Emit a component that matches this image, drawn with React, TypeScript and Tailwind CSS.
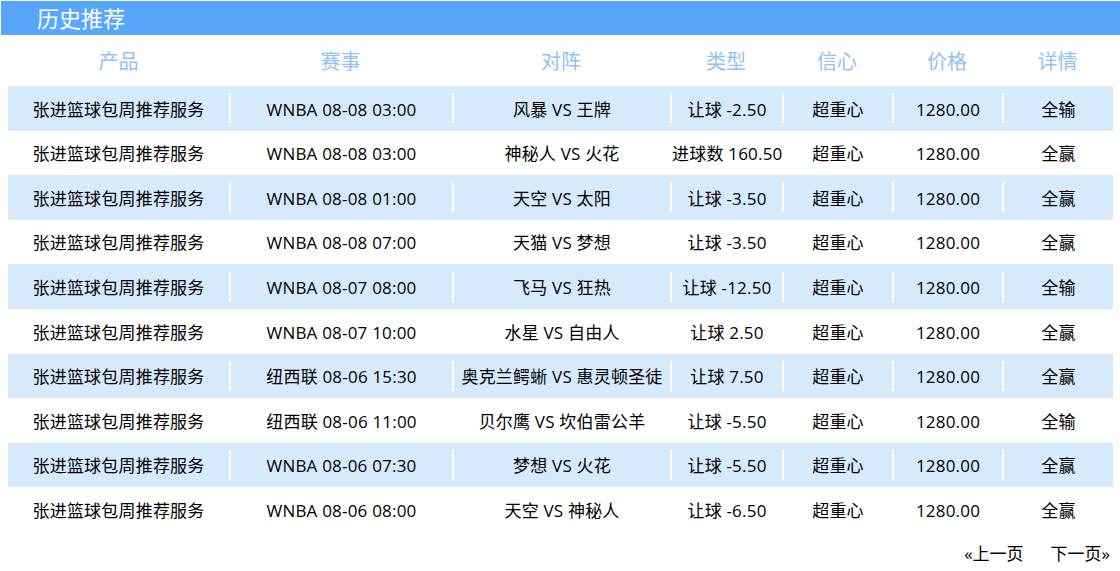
import React from "react";

const rows = [
  { game: "WNBA 08-08 03:00", match: "风暴 VS 王牌", type: "让球 -2.50", result: "全输" },
  { game: "WNBA 08-08 03:00", match: "神秘人 VS 火花", type: "进球数 160.50", result: "全赢" },
  { game: "WNBA 08-08 01:00", match: "天空 VS 太阳", type: "让球 -3.50", result: "全赢" },
  { game: "WNBA 08-08 07:00", match: "天猫 VS 梦想", type: "让球 -3.50", result: "全赢" },
  { game: "WNBA 08-07 08:00", match: "飞马 VS 狂热", type: "让球 -12.50", result: "全输" },
  { game: "WNBA 08-07 10:00", match: "水星 VS 自由人", type: "让球 2.50", result: "全赢" },
  { game: "纽西联 08-06 15:30", match: "奥克兰鳄蜥 VS 惠灵顿圣徒", type: "让球 7.50", result: "全赢" },
  { game: "纽西联 08-06 11:00", match: "贝尔鹰 VS 坎伯雷公羊", type: "让球 -5.50", result: "全输" },
  { game: "WNBA 08-06 07:30", match: "梦想 VS 火花", type: "让球 -5.50", result: "全赢" },
  { game: "WNBA 08-06 08:00", match: "天空 VS 神秘人", type: "让球 -6.50", result: "全赢" },
];

const headers = ["产品", "赛事", "对阵", "类型", "信心", "价格", "详情"];
const grid = "grid grid-cols-[221px_223px_218px_112px_110px_110px_111px]";

const Cell: React.FC<{ first?: boolean; children: React.ReactNode }> = ({ first, children }) => (
  <div className="flex items-center h-full overflow-hidden">
    {!first && <div className="w-[2px] h-[30px] bg-white shrink-0" />}
    <div className="flex-1 min-w-0 overflow-hidden whitespace-nowrap text-center pt-[2px]">{children}</div>
  </div>
);

const App: React.FC = () => {
  return (
    <div
      className="w-[1120px] h-[571px] bg-white overflow-hidden pt-px"
      style={{ fontFamily: '"Open Sans", "Noto Sans CJK SC", sans-serif' }}
    >
      <div className="ml-px h-[34px] bg-[#58a6fe] flex items-center pl-[36px]">
        <span className="text-white text-[22px] leading-none">历史推荐</span>
      </div>

      <div className="ml-[8px] w-[1105px]">
        <div className={`${grid} h-[51px] pt-[3px] items-center text-[20px] text-[#8fc1f6]`}>
          {headers.map((h) => (
            <div key={h} className="text-center">
              {h}
            </div>
          ))}
        </div>

        {rows.map((r, i) => (
          <div
            key={i}
            className={`${grid} h-[44.6px] text-[17px] tracking-[0.2px] text-black ${i % 2 === 0 ? "bg-[#d6eafc]" : "bg-white"}`}
          >
            <Cell first>张进篮球包周推荐服务</Cell>
            <Cell>{r.game}</Cell>
            <Cell>{r.match}</Cell>
            <Cell>{r.type}</Cell>
            <Cell>超重心</Cell>
            <Cell>1280.00</Cell>
            <Cell>{r.result}</Cell>
          </div>
        ))}
      </div>

      <div className="h-[44px] flex items-center justify-end gap-[27px] pr-[10px] text-[17px] text-black">
        <span>«上一页</span>
        <span>下一页»</span>
      </div>
    </div>
  );
};

export default App;
